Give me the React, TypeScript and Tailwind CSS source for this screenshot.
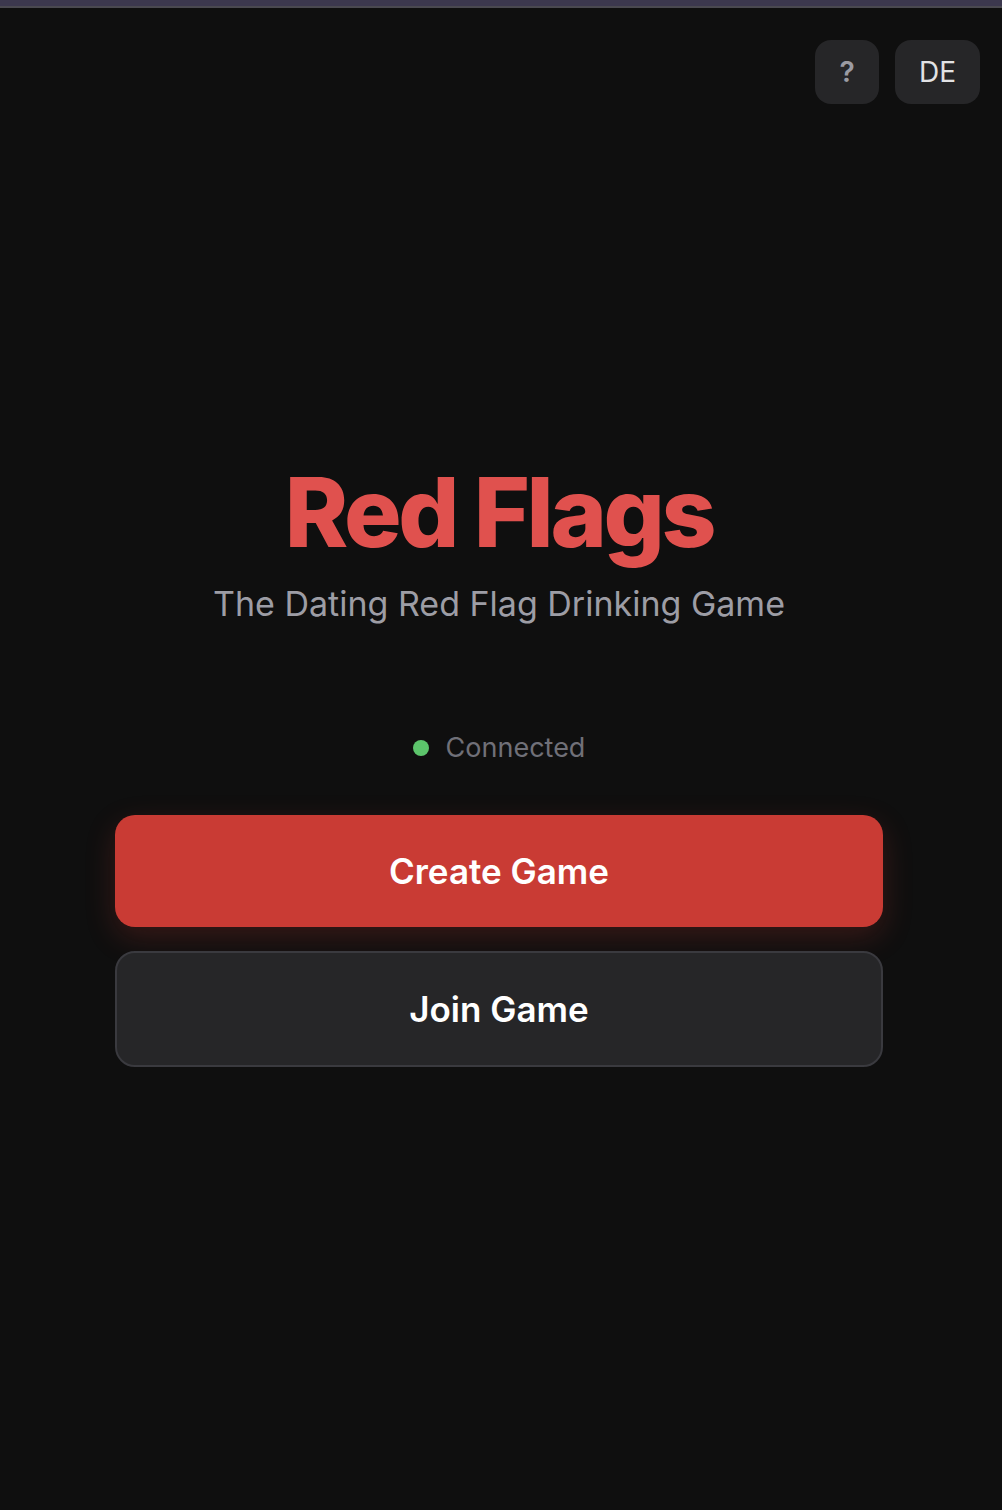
import { useState } from 'react'

type Lang = 'EN' | 'DE'

export default function App() {
  const [lang, setLang] = useState<Lang>('EN')
  const connected = true

  return (
    <div
      className="min-h-[1510px] bg-[#0f0f0f] text-white"
      style={{ fontFamily: 'Inter, "Noto Sans", sans-serif' }}
    >
      {/* Window chrome strip */}
      <div className="h-[6px] bg-[#3c384e]" />
      <div className="h-[2px] bg-[#4a4950]" />

      {/* Help + language toggle */}
      <header className="flex justify-end gap-4 pt-8 pr-[22px]">
        <button className="flex h-16 w-16 items-center justify-center rounded-2xl bg-[#262628] text-[28px] font-semibold text-[#9b9ba3]">
          ?
        </button>
        <button
          onClick={() => setLang(lang === 'EN' ? 'DE' : 'EN')}
          className="flex h-16 w-[85px] items-center justify-center rounded-2xl bg-[#262628] text-[28px] text-[#e2e2e4]"
        >
          DE
        </button>
      </header>

      <main className="mt-[360px] flex flex-col items-center pr-1">
        <h1 className="text-[96px] leading-none font-extrabold tracking-[-0.035em] text-[#e0514e]">
          Red Flags
        </h1>
        <p className="mt-[24px] text-[34px] leading-[40px] text-[#9d9da5]">
          The Dating Red Flag Drinking Game
        </p>

        <div className="mt-[110px] flex items-center gap-[17px] text-[27px] leading-[28px] text-[#707078]">
          <span
            className={connected ? 'h-4 w-4 rounded-full bg-[#5cc46b]' : 'h-4 w-4 rounded-full bg-[#e0514e]'}
          />
          <span>{connected ? 'Connected' : 'Disconnected'}</span>
        </div>

        <div className="mt-[53px] flex w-[768px] flex-col gap-6">
          <button className="h-[112px] rounded-[20px] bg-[#c93b34] text-[35px] font-semibold text-white shadow-[0_10px_30px_rgba(201,59,52,0.22)]">
            Create Game
          </button>
          <button className="h-[116px] rounded-[20px] border-2 border-[#3a3a3f] bg-[#262628] text-[35px] font-semibold text-white">
            Join Game
          </button>
        </div>
      </main>
    </div>
  )
}
